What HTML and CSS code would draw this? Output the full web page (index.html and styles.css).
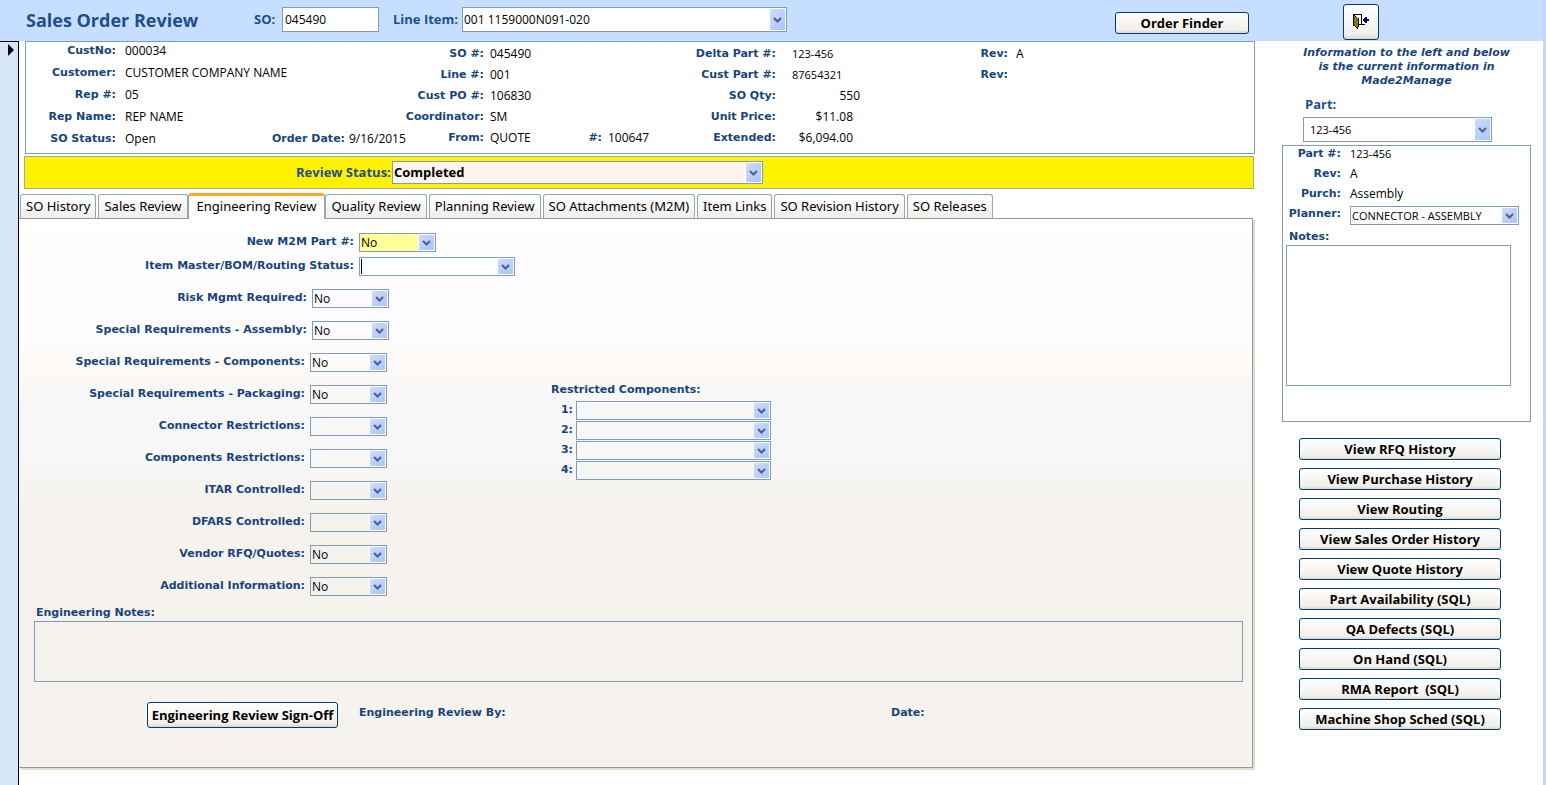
FILE: index.html
```html
<!DOCTYPE html>
<html lang="en">
    <head>
        <meta charset="UTF-8" />
        <title>Sales Order Review</title>
        <link rel="stylesheet" href="styles.css">
    </head>
    <body>
        <header class="top">
            <div class="topMain">
                <h1>Sales Order Review</h1>
                <label class="big soLabel" for="so">SO:</label>
                <input id="so" class="box soInput" type="text" value="045490"/>
                <label class="big lineLabel" for="lineItem">Line Item:</label>
                <select id="lineItem" class="box combo lineItem"><option>001 1159000N091-020</option></select>
                <button type="button" class="btn finder">Order Finder</button>
            </div>
            <div class="topSide">
                <button type="button" class="btn exit" aria-label="Close form">
                    <svg width="16" height="16" viewBox="0 0 16 16" shape-rendering="crispEdges">
                        <path d="M1 1h7v9H1z" fill="#fff"/>
                        <path d="M0 0h9v1H0zM0 0h1v12H0zM8 0h1v10H8zM6 10h6v1H6z" fill="#000"/>
                        <path d="M1 1h1v1h1v1h1v1h1v10H4v-1H3v-1H2v-1H1z" fill="#808000"/>
                        <path d="M1 1h1v1H1zM2 2h1v1H2zM3 3h1v1H3zM5 4h1v9H5zM4 13h1v2H4zM3 13h1v1H3zM2 12h1v1H2zM1 11h1v1H1z" fill="#000"/>
                        <path d="M10 5h1V4h1V3h2v2h2v2h-2v2h-2V8h-1V7h-1z" fill="#00008b"/>
                    </svg>
                </button>
            </div>
        </header>

        <div class="page">
            <div class="selector"><span class="arrow"></span></div>

            <main class="main">
                <section class="info">
                    <dl class="group cust">
                        <dt>CustNo:</dt><dd class="wide">000034</dd>
                        <dt>Customer:</dt><dd class="wide">CUSTOMER COMPANY NAME</dd>
                        <dt>Rep #:</dt><dd class="wide">05</dd>
                        <dt>Rep Name:</dt><dd class="wide">REP NAME</dd>
                        <dt>SO Status:</dt><dd>Open</dd>
                        <dt>Order Date:</dt><dd class="date">9/16/2015</dd>
                    </dl>
                    <dl class="group order">
                        <dt>SO #:</dt><dd class="wide">045490</dd>
                        <dt>Line #:</dt><dd class="wide">001</dd>
                        <dt>Cust PO #:</dt><dd class="wide">106830</dd>
                        <dt>Coordinator:</dt><dd class="wide">SM</dd>
                        <dt>From:</dt><dd>QUOTE</dd>
                        <dt>#:</dt><dd>100647</dd>
                    </dl>
                    <dl class="group part">
                        <dt>Delta Part #:</dt><dd class="small">123-456</dd>
                        <dt>Cust Part #:</dt><dd class="small">87654321</dd>
                        <dt>SO Qty:</dt><dd class="qty">550</dd>
                        <dt>Unit Price:</dt><dd class="money">$11.08</dd>
                        <dt>Extended:</dt><dd class="money">$6,094.00</dd>
                    </dl>
                    <dl class="group rev">
                        <dt>Rev:</dt><dd>A</dd>
                        <dt>Rev:</dt><dd></dd>
                    </dl>
                </section>

                <div class="status">
                    <label class="big" for="review">Review Status:</label>
                    <select id="review" class="box combo review"><option>Completed</option></select>
                </div>

                <div class="tabs" role="tablist">
                    <button type="button" role="tab">SO History</button>
                    <button type="button" role="tab">Sales Review</button>
                    <button type="button" role="tab" class="active" aria-selected="true">Engineering Review</button>
                    <button type="button" role="tab">Quality Review</button>
                    <button type="button" role="tab">Planning Review</button>
                    <button type="button" role="tab">SO Attachments (M2M)</button>
                    <button type="button" role="tab">Item Links</button>
                    <button type="button" role="tab">SO Revision History</button>
                    <button type="button" role="tab">SO Releases</button>
                </div>

                <section class="panel">
                    <div class="rows upper">
                        <label for="newPart">New M2M Part #:</label>
                        <select id="newPart" class="box combo short yellow"><option>No</option></select>
                        <label for="master">Item Master/BOM/Routing Status:</label>
                        <select id="master" class="box combo master"><option></option></select>
                    </div>
                    <div class="columns">
                        <div>
                            <div class="rows risk">
                                <label for="risk">Risk Mgmt Required:</label>
                                <select id="risk" class="box combo short"><option>No</option></select>
                                <label for="assembly">Special Requirements - Assembly:</label>
                                <select id="assembly" class="box combo short"><option>No</option></select>
                            </div>
                            <div class="rows">
                                <label for="components">Special Requirements - Components:</label>
                                <select id="components" class="box combo short"><option>No</option></select>
                                <label for="packaging">Special Requirements - Packaging:</label>
                                <select id="packaging" class="box combo short"><option>No</option></select>
                                <label for="connector">Connector Restrictions:</label>
                                <select id="connector" class="box combo short"><option></option></select>
                                <label for="compRestr">Components Restrictions:</label>
                                <select id="compRestr" class="box combo short"><option></option></select>
                                <label for="itar">ITAR Controlled:</label>
                                <select id="itar" class="box combo short"><option></option></select>
                                <label for="dfars">DFARS Controlled:</label>
                                <select id="dfars" class="box combo short"><option></option></select>
                                <label for="vendor">Vendor RFQ/Quotes:</label>
                                <select id="vendor" class="box combo short"><option>No</option></select>
                                <label for="additional">Additional Information:</label>
                                <select id="additional" class="box combo short"><option>No</option></select>
                            </div>
                        </div>
                        <div class="restricted">
                            <h2>Restricted Components:</h2>
                            <div class="restrictedRows">
                                <label for="r1">1:</label>
                                <select id="r1" class="box combo"><option></option></select>
                                <label for="r2">2:</label>
                                <select id="r2" class="box combo"><option></option></select>
                                <label for="r3">3:</label>
                                <select id="r3" class="box combo"><option></option></select>
                                <label for="r4">4:</label>
                                <select id="r4" class="box combo"><option></option></select>
                            </div>
                        </div>
                    </div>
                    <div class="engNotes">
                        <label for="engNotes">Engineering Notes:</label>
                        <textarea id="engNotes" class="box"></textarea>
                    </div>
                    <div class="sign">
                        <button type="button" class="btn signOff">Engineering Review Sign-Off</button>
                        <span class="by">Engineering Review By:</span>
                        <span>Date:</span>
                    </div>
                </section>
            </main>

            <aside class="side">
                <p class="note">Information to the left and below<br/>is the current information in<br/>Made2Manage</p>
                <div class="pick">
                    <label class="big" for="part">Part:</label>
                    <select id="part" class="box combo"><option>123-456</option></select>
                </div>
                <div class="partBox">
                    <div class="partRows">
                        <b>Part #:</b><span class="small">123-456</span>
                        <b>Rev:</b><span>A</span>
                        <b>Purch:</b><span>Assembly</span>
                        <label for="planner">Planner:</label>
                        <select id="planner" class="box combo"><option>CONNECTOR - ASSEMBLY</option></select>
                    </div>
                    <label class="notesLabel" for="notes">Notes:</label>
                    <textarea id="notes" class="box"></textarea>
                </div>
                <div class="links">
                    <button type="button" class="btn">View RFQ History</button>
                    <button type="button" class="btn">View Purchase History</button>
                    <button type="button" class="btn">View Routing</button>
                    <button type="button" class="btn">View Sales Order History</button>
                    <button type="button" class="btn">View Quote History</button>
                    <button type="button" class="btn">Part Availability (SQL)</button>
                    <button type="button" class="btn">QA Defects (SQL)</button>
                    <button type="button" class="btn">On Hand (SQL)</button>
                    <button type="button" class="btn">RMA Report&nbsp; (SQL)</button>
                    <button type="button" class="btn">Machine Shop Sched (SQL)</button>
                </div>
            </aside>
        </div>
    </body>
</html>
```
FILE: styles.css
```css
* {
    box-sizing: border-box;
}
body {
    margin: 0;
    min-height: 100vh;
    display: flex;
    flex-direction: column;
    border-right: 3px solid #c2d7fb;
    background: white;
    color: #000;
    font-family: "Open Sans", "Noto Sans", sans-serif;
    font-size: 12px;
    line-height: 17px;
}
h1, h2, p, dl, dd {
    margin: 0;
}
h1 {
    font-size: 18px;
    line-height: 24px;
    color: #1f4e8c;
    width: 228px;
}
button, input, select, textarea {
    font: inherit;
    color: inherit;
    margin: 0;
}
label, dt, h2, b, .sign span, .note {
    font-family: "DejaVu Sans", Verdana, sans-serif;
    font-size: 11px;
    font-weight: bold;
    line-height: 17px;
    color: #17457a;
    white-space: nowrap;
}
.big {
    font-family: "Open Sans", "Noto Sans", sans-serif;
    font-size: 13px;
    color: #1f4e8c;
}
.small {
    font-size: 11px;
}
.box {
    border: 1px solid #7f9db9;
    border-radius: 0;
    background-color: transparent;
    padding: 0;
    outline: none;
}
.combo {
    appearance: none;
    height: 19px;
    padding: 0 20px 0 1px;
    line-height: 17px;
    background-image:
        url("data:image/svg+xml,%3Csvg xmlns='http://www.w3.org/2000/svg' width='9' height='6'%3E%3Cpath d='M1 1l3.5 3.500L8 1' fill='none' stroke='%234d6185' stroke-width='2'/%3E%3C/svg%3E"),
        linear-gradient(135deg, #cddcff, #acc4fb),
        linear-gradient(#fff, #fff);
    background-repeat: no-repeat;
    background-position: right 4px center, right 1px center, right 0 center;
    background-size: 9px 6px, 15px calc(100% - 2px), 17px 100%;
}
.btn {
    height: 22px;
    padding: 0;
    border: 1px solid #003c74;
    border-radius: 3px;
    background: linear-gradient(#fff, #f6f4f1 60%, #f3efe9 85%, #ddd6cb);
    color: #000;
    font-size: 13px;
    font-weight: bold;
    line-height: 18px;
    white-space: nowrap;
}

/* header */
.top {
    display: flex;
    height: 41px;
    background: #c6deff;
}
.topMain {
    flex: 1;
    display: flex;
    align-items: center;
    padding: 0 6px 2px 26px;
}
.soLabel {
    width: 28px;
}
.soInput {
    width: 97px;
    height: 25px;
    padding: 0 2px;
    background: #fff;
}
.lineLabel {
    width: 83px;
    padding-left: 14px;
}
.lineItem {
    width: 325px;
    height: 25px;
    background-color: #fff;
}
.finder {
    width: 134px;
    margin: 6px 0 0 auto;
}
.topSide {
    width: 288px;
    padding: 4px 0 0 88px;
}
.exit {
    display: flex;
    align-items: center;
    justify-content: center;
    width: 36px;
    height: 36px;
}

/* record */
.page {
    flex: 1;
    display: flex;
}
.selector {
    width: 19px;
    border-top: 1px solid #000;
    border-right: 1px solid #000;
    background: #d6e7f7;
    padding: 2px 0 0 8px;
}
.arrow {
    display: block;
    width: 0;
    border: 6px solid transparent;
    border-left-color: #000;
    border-right: 0;
}
.main {
    flex: 1;
    min-width: 0;
}
.info {
    display: flex;
    height: 113px;
    margin: 0 0 2px 6px;
    border: 1px solid #7f9db9;
}
.group {
    display: grid;
    grid-auto-rows: 17px;
    row-gap: 4px;
    align-content: start;
    white-space: nowrap;
    padding-top: 3px;
}
.group dt {
    text-align: right;
}
.group .wide {
    grid-column: span 3;
}
.cust {
    grid-template-columns: 90px 108px 121px 56px;
    row-gap: 5px;
    padding-top: 0;
}
.cust dd {
    padding-left: 9px;
}
.cust .date {
    padding-left: 4px;
}
.order dd {
    padding-left: 6px;
}
.order {
    grid-template-columns: 83px 100px 18px 80px;
}
.part {
    grid-template-columns: 94px 100px;
}
.part dd {
    padding-left: 16px;
}
.part .qty {
    text-align: right;
    padding-right: 16px;
}
.part .money {
    text-align: right;
    padding-right: 23px;
}
.rev {
    grid-template-columns: 132px 40px;
}
.rev dd {
    padding-left: 8px;
}
.status {
    display: flex;
    align-items: center;
    height: 33px;
    margin: 0 1px 4px 5px;
    padding-left: 271px;
    border: 1px solid #aca899;
    background: #fff200;
}
.status label {
    width: 96px;
}
.review {
    width: 371px;
    height: 23px;
    background-color: #fff3ee;
    font-size: 13px;
    font-weight: bold;
}

/* tabs */
.tabs {
    display: flex;
    align-items: flex-end;
    gap: 2px;
    padding-left: 1px;
}
.tabs button {
    height: 24px;
    padding: 0 5px;
    border: 1px solid #91a7b4;
    border-bottom: 0;
    border-radius: 3px 3px 0 0;
    background: linear-gradient(#fff, #f7f5f2 60%, #f0eeea);
    font-family: "Noto Sans", sans-serif;
    font-size: 13px;
    white-space: nowrap;
}
.tabs .active {
    height: 26px;
    margin: 0 -2px -1px;
    padding: 0 8px 3px;
    border-top: 3px solid #f5a82c;
    background: #fff;
    position: relative;
}
.panel {
    margin-right: 2px;
    padding: 14px 9px 39px 0;
    border: 1px solid #919b9c;
    border-left: 0;
    box-shadow: 2px 2px 0 #e3dfd0;
    background: linear-gradient(#fff, #fefbff 80px, #fefbff 120px, #fdfaf7 145px, #f7f7f7 185px, #f7f7f7 240px, #f6f3ee 285px);
}
.rows {
    display: grid;
    grid-template-columns: 286px max-content;
    column-gap: 5px;
    row-gap: 13px;
    margin-bottom: 13px;
}
.rows:last-child {
    margin-bottom: 8px;
}
.rows label {
    text-align: right;
}
.risk {
    grid-template-columns: 288px max-content;
}
.upper {
    grid-template-columns: 335px max-content;
    row-gap: 5px;
}
.short {
    width: 77px;
}
.yellow {
    background-color: #ffff99;
}
.master {
    width: 156px;
    background-color: #fff;
    /* last layer is the text caret */
    background-image:
        url("data:image/svg+xml,%3Csvg xmlns='http://www.w3.org/2000/svg' width='9' height='6'%3E%3Cpath d='M1 1l3.500 3.500L8 1' fill='none' stroke='%234d6185' stroke-width='2'/%3E%3C/svg%3E"),
        linear-gradient(135deg, #cddcff, #acc4fb),
        linear-gradient(#000, #000);
    background-position: right 4px center, right 1px center, left 1px center;
    background-size: 9px 6px, 15px calc(100% - 2px), 1px 15px;
}
.columns {
    display: flex;
}
.columns > div:first-child {
    width: 532px;
}
.restricted {
    padding-top: 92px;
}
.restrictedRows {
    display: grid;
    grid-template-columns: 22px 195px;
    gap: 1px 3px;
    margin-top: 3px;
}
.restrictedRows label {
    text-align: right;
}
.engNotes {
    padding-left: 15px;
}
.engNotes label {
    display: block;
    padding-left: 2px;
}
.engNotes textarea {
    display: block;
    width: 100%;
    height: 61px;
    resize: none;
}
.sign {
    display: flex;
    padding: 20px 0 0 128px;
}
.sign span {
    line-height: 21px;
}
.signOff {
    width: 191px;
    height: 26px;
}
.sign .by {
    width: 532px;
    margin-left: 21px;
}

/* right column */
.side {
    width: 288px;
    padding: 5px 12px 0 27px;
}
.note {
    font-style: italic;
    line-height: 14px;
    text-align: center;
}
.pick {
    padding: 7px 0 0 21px;
}
.pick label {
    display: block;
    padding-left: 2px;
    line-height: 18px;
}
.pick select {
    display: block;
    width: 189px;
    height: 25px;
    margin: 4px 0 3px;
    padding-left: 6px;
}
.partBox {
    height: 277px;
    border: 1px solid #7f9db9;
}
.partRows {
    display: grid;
    grid-template-columns: 58px 169px;
    grid-auto-rows: 19px;
    gap: 1px 9px;
    line-height: 16px;
}
.partRows b, .partRows label {
    text-align: right;
    line-height: 16px;
}
.partRows select, .pick select {
    font-size: 11px;
}
.notesLabel {
    display: block;
    margin-top: 3px;
    padding-left: 6px;
}
#notes {
    display: block;
    width: 225px;
    height: 141px;
    margin-left: 3px;
    resize: none;
}
.links {
    display: grid;
    gap: 8px;
    padding: 16px 30px 0 17px;
}
```
